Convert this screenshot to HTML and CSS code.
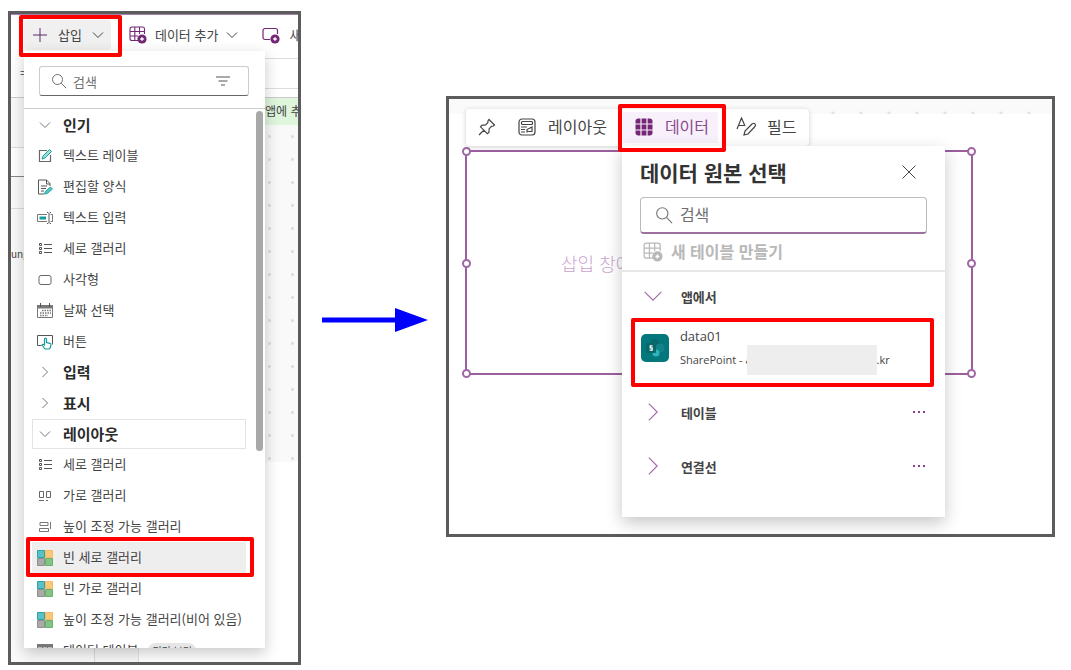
FILE: index.html
```html
<!DOCTYPE html>
<html lang="ko">
<head>
    <meta charset="UTF-8">
    <meta name="viewport" content="width=device-width, initial-scale=1.0">
    <title>빈 세로 갤러리 삽입</title>
    <link rel="stylesheet" href="styles.css">
</head>
<body>
    <!-- Shared icons -->
    <svg class="sprite" aria-hidden="true">
        <symbol id="chev-down" viewBox="0 0 12 12"><path d="M1 3.5l5 5 5-5" fill="none" stroke="currentColor"/></symbol>
        <symbol id="chev-right" viewBox="0 0 12 12"><path d="M3.5 1l5 5-5 5" fill="none" stroke="currentColor"/></symbol>
        <symbol id="search" viewBox="0 0 16 16"><g fill="none" stroke="currentColor"><circle cx="6.5" cy="6.5" r="5"/><path d="M10.2 10.2l5 5"/></g></symbol>
        <symbol id="grid-add" viewBox="0 0 18 18">
            <path d="M9 14.500H3a2 2 0 0 1-2-2V3a2 2 0 0 1 2-2h10.500a2 2 0 0 1 2 2v5M1 5.500h14.500M1 10h8M5.800 1v13.500M10.500 1v7" fill="none" stroke="currentColor" stroke-width="1.100"/>
            <circle cx="13" cy="13" r="4.600" fill="currentColor"/><path d="M13 11.200v3.600M11.200 13h3.600" stroke="#fff" stroke-width="1.400"/>
        </symbol>
        <symbol id="v-gallery" viewBox="0 0 16 16">
            <g fill="none" stroke="#555"><path d="M7 3.500h8M7 7.500h8M7 11.500h8"/><path d="M2.500 2.500h2v2h-2zM2.500 6.500h2v2h-2zM2.500 10.500h2v2h-2z"/></g>
        </symbol>
        <symbol id="blank-gallery" viewBox="0 0 16 16">
            <path d="M.5.5h7v7h-7z" fill="#5cc1c4" stroke="#2ba3a8"/>
            <path d="M8.500.5h7v7h-7z" fill="#fcc878" stroke="#f5bb62"/>
            <path d="M.5 8.500h7v7h-7z" fill="#aaa" stroke="#8f8f8f"/>
            <path d="M8.500 8.500h7v7h-7z" fill="#83c485" stroke="#68b26b"/>
        </symbol>
    </svg>

    <main class="steps">
        <section class="shot insert-shot">
            <header class="command-bar">
                <button type="button" class="command insert marked">
                    <svg class="i16" viewBox="0 0 16 16"><path d="M8 1v14M1 8h14" stroke="#5a2a66"/></svg>
                    <span>삽입</span>
                    <svg class="i12"><use href="#chev-down"/></svg>
                </button>
                <button type="button" class="command">
                    <svg class="i18 purple"><use href="#grid-add"/></svg>
                    <span>데이터 추가</span>
                    <svg class="i12"><use href="#chev-down"/></svg>
                </button>
                <button type="button" class="command new-screen">
                    <svg class="i18 purple" viewBox="0 0 18 18"><path d="M8 13.500H3a2 2 0 0 1-2-2v-7a2 2 0 0 1 2-2h10.500a2 2 0 0 1 2 2V8" fill="none" stroke="currentColor" stroke-width="1.200"/><circle cx="13" cy="13" r="4.600" fill="currentColor"/><path d="M13 11.200v3.600M11.200 13h3.600" stroke="#fff" stroke-width="1.400"/></svg>
                    <span>새 화면</span>
                </button>
            </header>
            <div class="formula-bar">
                <span>=</span>
                <input type="text" aria-label="수식">
            </div>
            <div class="studio">
                <div class="tree">
                    <div class="tree-title"></div>
                    <div class="tree-tabs"></div>
                    <div class="tree-search"></div>
                    <p>ung</p>
                </div>
                <div class="gutter"></div>
                <div class="stage">
                    <div class="notice">앱에 추가</div>
                    <div class="dots"></div>
                </div>
            </div>

            <div class="insert-menu">
                <div class="menu-search">
                    <svg class="i16"><use href="#search"/></svg>
                    <input type="search" placeholder="검색" aria-label="검색">
                    <button type="button" aria-label="필터"><svg class="i16" viewBox="0 0 16 16"><path d="M1 4h14M3.500 8h9M6 12h4" stroke="#555" stroke-width="1.200"/></svg></button>
                </div>
                <div class="menu-body">
                    <div class="menu-list">
                        <button type="button" class="category open"><svg class="i12"><use href="#chev-down"/></svg><span>인기</span></button>
                        <button type="button" class="item">
                            <svg class="i16" viewBox="0 0 16 16"><path d="M10 2.500H2.500v11h11V7" fill="none" stroke="#666" stroke-width="1.200"/><path d="M5 11l1-3 6.500-6.500 2 2L8 10z" fill="#9edddd" stroke="#1c9c9c"/></svg>
                            <span>텍스트 레이블</span>
                        </button>
                        <button type="button" class="item">
                            <svg class="i16" viewBox="0 0 16 16"><path d="M7 15H1.500V1h8L13 4.500V7M9.500 1v4H13M4 7h6M4 9.500h5M4 12h3" fill="none" stroke="#555"/><path d="M7.500 15l.8-2.500 5.200-4.500 2 2-5.200 4.500z" fill="#58c4c4" stroke="#2aa5a5"/></svg>
                            <span>편집할 양식</span>
                        </button>
                        <button type="button" class="item">
                            <svg class="i16" viewBox="0 0 16 16"><path d="M10 4.500H.5v7H10M13.500 4.500h2v7h-2" fill="none" stroke="#777"/><path d="M2.500 6.500H9v3H2.500z" fill="#159c9c"/><path d="M10 2.500h1l1 1 1-1h1M10 13.500h1l1-1 1 1h1M12 3.500v9" fill="none" stroke="#555"/></svg>
                            <span>텍스트 입력</span>
                        </button>
                        <button type="button" class="item"><svg class="i16"><use href="#v-gallery"/></svg><span>세로 갤러리</span></button>
                        <button type="button" class="item">
                            <svg class="i16" viewBox="0 0 16 16"><rect x="2" y="3.500" width="12" height="9" rx="2" fill="none" stroke="#666"/></svg>
                            <span>사각형</span>
                        </button>
                        <button type="button" class="item">
                            <svg class="i16" viewBox="0 0 16 16"><path d="M.5 2.500h15v12H.5z" fill="none" stroke="#777"/><path d="M0 2h16v3.500H0z" fill="#777"/><path d="M3.500 0v4M12.500 0v4" stroke="#555"/><path d="M5 7.500h9M3 10h11M3 12.500h8" stroke="#777" stroke-width="1.500" stroke-dasharray="1.500 1"/></svg>
                            <span>날짜 선택</span>
                        </button>
                        <button type="button" class="item">
                            <svg class="i16" viewBox="0 0 16 16"><path d="M4.500 11.500H.5v-10h15v9" fill="none" stroke="#555"/><path d="M7.500 11V5a1 1 0 0 1 2 0v3.500l3.500.8q1.200.4 1 1.700l-.8 3-1 1H8l-3-4q.5-1.500 2.500 0z" fill="#fff" stroke="#159c9c" stroke-width="1.200"/></svg>
                            <span>버튼</span>
                        </button>
                        <button type="button" class="category"><svg class="i12"><use href="#chev-right"/></svg><span>입력</span></button>
                        <button type="button" class="category"><svg class="i12"><use href="#chev-right"/></svg><span>표시</span></button>
                        <button type="button" class="category open focused"><svg class="i12"><use href="#chev-down"/></svg><span>레이아웃</span></button>
                        <button type="button" class="item"><svg class="i16"><use href="#v-gallery"/></svg><span>세로 갤러리</span></button>
                        <button type="button" class="item">
                            <svg class="i16" viewBox="0 0 16 16"><path d="M2.500 3.500h4v6h-4zM9.500 3.500h4v6h-4zM2 12.500h5M9 12.500h2" fill="none" stroke="#666"/></svg>
                            <span>가로 갤러리</span>
                        </button>
                        <button type="button" class="item">
                            <svg class="i16" viewBox="0 0 16 16"><path d="M3 3.500h8v3H3zM2.500 9.500h9v3h-9zM13.500 3v7" fill="none" stroke="#777"/></svg>
                            <span>높이 조정 가능 갤러리</span>
                        </button>
                        <button type="button" class="item selected marked"><svg class="i16"><use href="#blank-gallery"/></svg><span>빈 세로 갤러리</span></button>
                        <button type="button" class="item"><svg class="i16"><use href="#blank-gallery"/></svg><span>빈 가로 갤러리</span></button>
                        <button type="button" class="item"><svg class="i16"><use href="#blank-gallery"/></svg><span>높이 조정 가능 갤러리(비어 있음)</span></button>
                        <button type="button" class="item">
                            <svg class="i16" viewBox="0 0 16 16"><path d="M.5 1.500h15v13H.5zM.5 8.500h15M5.500 4v10M10.500 4v10" fill="none" stroke="#777"/><path d="M0 1h16v3.500H0z" fill="#777"/></svg>
                            <span>데이터 테이블</span><em>미리 보기</em>
                        </button>
                    </div>
                    <div class="scroll-track"><div class="scroll-thumb"></div></div>
                </div>
            </div>
        </section>

        <svg class="arrow" viewBox="0 0 106 24" role="img" aria-label="다음 단계"><path d="M0 9.500h73V0l33 12-33 12v-9.500H0z" fill="#00f"/></svg>

        <section class="shot gallery-shot">
            <div class="ruler"></div>
            <nav class="gallery-toolbar">
                <button type="button" class="tool" aria-label="고정">
                    <svg class="i18" viewBox="0 0 18 18"><path d="M11 1.500l5.500 5.500-1.200 1-1.800.3-2.300 2.400-.3 3.800-1.500 1.200-6.900-6.900L3.800 7.300l3.800-.4 2.200-2.200.3-2zM6 12l-5 5" fill="none" stroke="currentColor" stroke-width="1.200"/></svg>
                </button>
                <button type="button" class="tool">
                    <svg class="i18" viewBox="0 0 18 18"><g fill="none" stroke="currentColor" stroke-width="1.200"><rect x="1" y="1" width="16" height="16" rx="3"/><rect x="3.500" y="3.500" width="11" height="3" rx="1"/><path d="M3 9h6M3 11.500h4M3 14h4M9 14.500v-3l5-2.500v4.500H9"/></g></svg>
                    <span>레이아웃</span>
                </button>
                <div class="data-tool">
                    <button type="button" class="tool active marked">
                        <svg class="i18" viewBox="0 0 18 18"><rect x=".5" y=".5" width="17" height="17" rx="3" fill="#742774"/><path d="M6 0v18M12 0v18M0 6h18M0 12h18" stroke="#f8f0fa" stroke-width="1.200"/></svg>
                        <span>데이터</span>
                    </button>
                    <div class="source-popup">
                        <div class="popup-head">
                            <h2>데이터 원본 선택</h2>
                            <button type="button" aria-label="닫기"><svg class="i16" viewBox="0 0 16 16"><path d="M1.500 1.500l13 13M14.500 1.500l-13 13" stroke="#444"/></svg></button>
                        </div>
                        <div class="popup-search">
                            <svg class="i18"><use href="#search"/></svg>
                            <input type="search" placeholder="검색" aria-label="데이터 원본 검색">
                        </div>
                        <button type="button" class="new-table" disabled><svg class="i20"><use href="#grid-add"/></svg><span>새 테이블 만들기</span></button>
                        <button type="button" class="group first"><svg class="i20"><use href="#chev-down"/></svg><span>앱에서</span></button>
                        <button type="button" class="source marked">
                            <svg class="i28" viewBox="0 0 28 28"><rect width="28" height="28" rx="5" fill="#03787c"/><circle cx="14" cy="10" r="5" fill="#07696c"/><circle cx="19" cy="14" r="4.500" fill="#128389"/><circle cx="15" cy="19" r="3.500" fill="#2fb4be"/><rect x="5" y="9" width="10" height="10" rx="1" fill="#0a686b"/><path d="M11.500 11.800H9.200v2h2v2.300H8.600" fill="none" stroke="#fff" stroke-width="1.200"/></svg>
                            <span class="source-text">
                                <span class="source-name">data01</span>
                                <span class="source-site">SharePoint - a<i class="redacted"></i>.kr</span>
                            </span>
                        </button>
                        <div class="group-row">
                            <button type="button" class="group"><svg class="i20"><use href="#chev-right"/></svg><span>테이블</span></button>
                            <button type="button" class="more" aria-label="테이블 추가 옵션"><svg viewBox="0 0 14 4"><path d="M1 1h2v2H1zM6 1h2v2H6zM11 1h2v2h-2z" fill="#8b3f8f"/></svg></button>
                        </div>
                        <div class="group-row">
                            <button type="button" class="group"><svg class="i20"><use href="#chev-right"/></svg><span>연결선</span></button>
                            <button type="button" class="more" aria-label="연결선 추가 옵션"><svg viewBox="0 0 14 4"><path d="M1 1h2v2H1zM6 1h2v2H6zM11 1h2v2h-2z" fill="#8b3f8f"/></svg></button>
                        </div>
                    </div>
                </div>
                <button type="button" class="tool">
                    <svg class="i20" viewBox="0 0 20 20"><g fill="none" stroke="currentColor" stroke-width="1.200"><path d="M1 12L5.500 1 9 9M2.500 8.500h5.500M8 18l1-4 7-7q2-1.500 3 0t-.5 3l-6.500 7z"/></g></svg>
                    <span>필드</span>
                </button>
            </nav>
            <div class="selection">
                <p>삽입 창에서 항목 추가</p>
                <i class="handle top left"></i>
                <i class="handle top right"></i>
                <i class="handle middle left"></i>
                <i class="handle middle right"></i>
                <i class="handle bottom left"></i>
                <i class="handle bottom right"></i>
            </div>
        </section>
    </main>
</body>
</html>
```
FILE: styles.css
```css
body {
    margin: 0;
    background: #fff;
    color: #444;
    font-family: "Noto Sans CJK KR", "Noto Sans", sans-serif;
    font-size: 13px;
}

button, input {
    font: inherit;
    color: inherit;
    background: none;
    border: none;
    margin: 0;
    padding: 0;
    text-align: left;
}

button {
    cursor: pointer;
}

input {
    min-width: 0;
    outline: none;
}

input::placeholder {
    color: #707070;
    opacity: 1;
}

svg {
    flex: none;
    display: block;
}

.sprite {
    position: absolute;
    width: 0;
    height: 0;
}

.i12 { width: 12px; height: 12px; }
.i16 { width: 16px; height: 16px; }
.i18 { width: 18px; height: 18px; }
.i20 { width: 20px; height: 20px; }
.i28 { width: 28px; height: 28px; }

.purple {
    color: #742774;
}

.steps {
    display: grid;
    grid-template-columns: 293fr 145fr 609fr;
    align-items: start;
    padding: 11px 16px 5px 8px;
}

.shot {
    position: relative;
    box-sizing: border-box;
    border: 3px solid #5c5c5c;
}

/* Red frames around the parts to click */
.marked {
    position: relative;
}

.marked::after {
    content: "";
    position: absolute;
    inset: -5px;
    border: 4px solid #f00;
    border-radius: 2px;
    z-index: 5;
    pointer-events: none;
}

/* Step 1: insert menu */
.insert-shot {
    display: flex;
    flex-direction: column;
    height: calc(100vh - 16px);
    min-height: 400px;
    overflow: hidden;
}

.command-bar {
    display: flex;
    flex: none;
    align-items: center;
    box-sizing: border-box;
    height: 44px;
    padding: 0 0 3px 13px;
    border-top: 1px solid #a67fa8;
    white-space: nowrap;
}

.command {
    display: flex;
    flex: none;
    align-items: center;
    gap: 8px;
    height: 30px;
    margin-left: 18px;
}

.command span {
    padding-bottom: 2px;
}

.command.insert {
    gap: 10px;
    margin-left: 0;
    padding: 0 7px 0 8px;
    background: #f0f0f0;
    border-radius: 3px;
}

.insert.marked::after {
    inset: -5px -11px -7px -5px;
}

.command.new-screen {
    gap: 9px;
    margin-left: 24px;
}

.formula-bar {
    display: flex;
    flex: none;
    box-sizing: border-box;
    height: 40px;
    padding-left: 9px;
    border-bottom: 1px solid #ccc;
}

.formula-bar span {
    margin-top: 5px;
}

.formula-bar input {
    flex: 1;
    height: 29px;
    margin-left: 12px;
    border-top: 1px solid #ddd;
    border-bottom: 1px solid #ddd;
}

.studio {
    display: grid;
    grid-template-columns: 84px 44px 1fr;
    flex: 1;
    min-height: 0;
}

.tree {
    background: #fafafa;
    border-right: 1px solid #ddd;
    font-size: 10px;
}

.tree-title {
    height: 49px;
    border-bottom: 1px solid #ddd;
}

.tree-tabs {
    height: 28px;
    background: #fff;
    border-bottom: 1px solid #888;
}

.tree-search {
    height: 31px;
    border-bottom: 1px solid #ddd;
}

.tree p {
    margin: 37px 0 0;
    line-height: 15px;
}

.gutter {
    background: #f7f7f7;
    border-right: 1px solid #e5e5e5;
}

.stage {
    overflow: hidden;
    white-space: nowrap;
}

.notice {
    height: 27px;
    padding-left: 126px;
    background: #dff6dd;
    font-size: 12px;
    line-height: 26px;
}

.dots {
    height: 337px;
    background: #f9f9f9 radial-gradient(circle, #ddd 1px, transparent 2px) 4px 0 / 23px 23px;
}

.insert-menu {
    position: absolute;
    top: 37px;
    left: 13px;
    bottom: 14px;
    display: flex;
    flex-direction: column;
    width: 241px;
    background: #fff;
    box-shadow: 0 5px 14px rgba(0, 0, 0, 0.22);
}

.menu-search {
    display: flex;
    flex: none;
    align-items: center;
    box-sizing: border-box;
    height: 30px;
    margin: 15px 16px 12px 15px;
    padding: 0 17px 0 11px;
    border: 1px solid #ccc;
    border-bottom-color: #666;
    border-radius: 3px;
    color: #707070;
}

.menu-search input {
    flex: 1;
    margin-left: 6px;
}

.menu-body {
    display: flex;
    flex: 1;
    min-height: 0;
    overflow: hidden;
    border-top: 1px solid #ccc;
}

.menu-list {
    flex: 1;
    min-width: 0;
    padding: 1px 10px 0 8px;
}

.category, .item {
    display: flex;
    align-items: center;
    box-sizing: border-box;
    width: 100%;
    white-space: nowrap;
}

.category {
    height: 30px;
    margin-bottom: 1px;
    padding-left: 7px;
    gap: 12px;
    color: #2b2b2b;
    font-size: 15px;
    font-weight: bold;
}

.category.open {
    margin-bottom: 0;
}

.category svg {
    color: #777;
}

.category span, .item span {
    padding-bottom: 2px;
}

.category.focused {
    padding-left: 6px;
    border: 1px solid #e3e3e3;
}

.item {
    height: 31px;
    padding-left: 5px;
    gap: 10px;
}

.item em {
    padding: 0 4px;
    border-radius: 8px;
    background: #e6e6e6;
    font-size: 10px;
    font-style: normal;
    line-height: 15px;
}

.item.selected {
    background: #eee;
}

.selected.marked::after {
    inset: -5px -8px -4px -6px;
}

.scroll-track {
    flex: none;
    width: 7px;
    padding: 2px 2px 0 0;
}

.scroll-thumb {
    height: 340px;
    border-radius: 4px;
    background: #a8a8a8;
}

.arrow {
    box-sizing: border-box;
    width: 100%;
    margin-top: 297px;
    padding: 0 18px 0 21px;
}

/* Step 2: data source of the gallery */
.gallery-shot {
    min-height: 441px;
    margin-top: 85px;
}

.ruler {
    height: 15px;
    background: #fafafa radial-gradient(circle, #e2e2e2 1px, transparent 2px) 6px 8px / 28px 12px repeat-x;
}

.gallery-toolbar {
    position: relative;
    z-index: 2;
    display: flex;
    align-items: center;
    box-sizing: border-box;
    width: max-content;
    height: 37px;
    margin: -5px 0 0 17px;
    padding: 0 12px;
    background: #fff;
    border-radius: 4px;
    box-shadow: 0 1px 5px rgba(0, 0, 0, 0.2);
    font-size: 16px;
}

.tool {
    display: flex;
    align-items: center;
    gap: 12px;
    box-sizing: border-box;
    height: 31px;
    margin-right: 22px;
    padding-bottom: 2px;
}

.tool span {
    padding-bottom: 2px;
}

.tool:last-child {
    margin: 0 0 0 18px;
    gap: 11px;
}

.data-tool {
    position: relative;
    margin-left: -6px;
}

.tool.active {
    margin: 0;
    padding: 0 9px 2px 12px;
    background: #f8f0fa;
    color: #8a4a8f;
}

.active.marked::after {
    inset: -8px -8px -9px -5px;
}

.source-popup {
    position: absolute;
    top: 34px;
    left: -1px;
    width: 323px;
    padding-bottom: 24px;
    background: #fff;
    box-shadow: 0 6px 16px rgba(0, 0, 0, 0.22);
}

.popup-head {
    display: flex;
    align-items: center;
    justify-content: space-between;
    height: 51px;
    padding: 0 28px 0 18px;
}

.popup-head h2 {
    margin: 0;
    color: #333;
    font-size: 21px;
    font-weight: bold;
}

.popup-search {
    display: flex;
    align-items: center;
    box-sizing: border-box;
    height: 37px;
    margin: 0 18px;
    padding-left: 14px;
    border: 1px solid #bbb;
    border-bottom: 2px solid #9b6f9e;
    border-radius: 4px;
    color: #777;
}

.popup-search input {
    flex: 1;
    margin-left: 7px;
    padding-bottom: 2px;
}

.new-table {
    display: flex;
    align-items: center;
    gap: 8px;
    width: 100%;
    height: 38px;
    padding-left: 21px;
    border-bottom: 2px solid #e8e8e8;
    color: #b8b8b8;
    font-weight: bold;
}

.new-table span {
    padding-bottom: 2px;
}

.group {
    display: flex;
    align-items: center;
    gap: 18px;
    height: 54px;
    padding-left: 21px;
    color: #444;
    font-size: 13px;
    font-weight: bold;
}

.group svg {
    color: #a269a6;
    stroke-width: 0.700px;
}

.group.first {
    height: 48px;
}

.group-row {
    display: flex;
    align-items: center;
    justify-content: space-between;
    padding-right: 19px;
}

.more svg {
    width: 14px;
    height: 4px;
}

.source {
    display: flex;
    align-items: center;
    gap: 11px;
    box-sizing: border-box;
    width: 293px;
    height: 59px;
    margin: 3px 0 3px 14px;
    padding: 0 0 10px 5px;
}

.source-text {
    flex: 1;
    font-family: "Open Sans", "Noto Sans", sans-serif;
    font-size: 11px;
    line-height: 24px;
}

.source-name {
    display: block;
    font-size: 13px;
}

.source-site {
    display: flex;
    align-items: center;
    white-space: pre;
}

.redacted {
    width: 130px;
    height: 30px;
    margin: -3px 0 -3px -5px;
    background: #eee;
}

.selection {
    position: relative;
    box-sizing: border-box;
    height: 225px;
    margin: 4px 79px 0 16px;
    border: 2px solid #9b5f9e;
}

.selection p {
    margin: 0;
    padding: 98px 0 0 94px;
    color: #cba3d0;
    font-size: 18px;
    font-weight: 300;
    line-height: 26px;
}

.handle {
    position: absolute;
    width: 5px;
    height: 5px;
    border: 2px solid #a066a3;
    border-radius: 50%;
    background: #fff;
}

.handle.top { top: -5px; }
.handle.middle { top: calc(50% - 4px); }
.handle.bottom { bottom: -5px; }
.handle.left { left: -5px; }
.handle.right { right: -5px; }
```
